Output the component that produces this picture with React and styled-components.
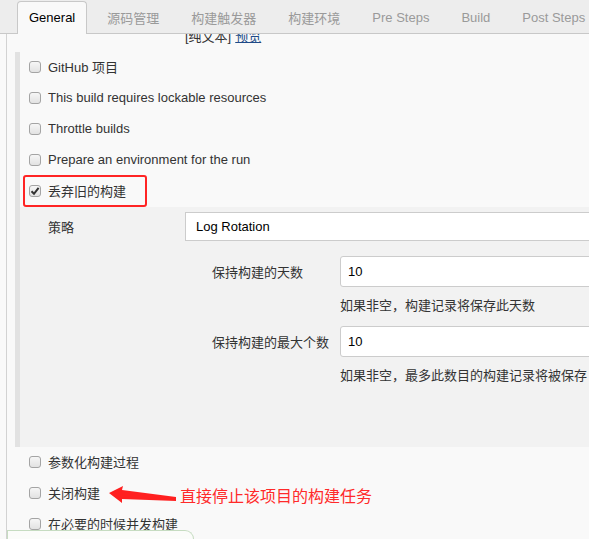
import React from "react";
import styled, { createGlobalStyle } from "styled-components";

const GlobalStyle = createGlobalStyle`
  html, body { margin: 0; padding: 0; background: #f9f9f9; overflow: hidden; }
  body {
    font-family: "Liberation Sans", Arial, "Noto Sans CJK SC", sans-serif;
    font-size: 13px;
    color: #333;
  }
`;

const Page = styled.div`
  position: relative;
  width: 589px;
  height: 539px;
  overflow: hidden;
  background: #f9f9f9;
`;

const TabBar = styled.div`
  display: flex;
  align-items: flex-end;
  height: 34px;
  box-sizing: border-box;
  padding-left: 17px;
  background: #ededed;
  border-bottom: 1px solid #c8c8c8;
  width: 700px;
`;

const Tab = styled.div`
  flex-shrink: 0;
  height: 33px;
  box-sizing: border-box;
  margin-bottom: -1px;
  margin-right: 8px;
  padding: 0 11px 1px;
  display: flex;
  align-items: center;
  white-space: nowrap;
  border: 1px solid ${(p) => (p.$active ? "#c8c8c8" : "transparent")};
  border-bottom: none;
  border-radius: 4px 4px 0 0;
  background: ${(p) => (p.$active ? "#f9f9f9" : "transparent")};
  color: ${(p) => (p.$active ? "#000" : "#9a9a9a")};
`;

const Content = styled.div`
  margin-left: 6px;
  width: 700px;
  height: 505px;
  overflow: hidden;
  border-left: 1px solid #d2d2d2;
  background: #f9f9f9;
`;

const PreviewLine = styled.div`
  margin-top: -5px;
  height: 16px;
  line-height: 16px;
  padding-left: 178px;
  color: #333;
`;

const PreviewLink = styled.a`
  color: #204a87;
  text-decoration: underline;
  margin-left: 4px;
`;

const Section = styled.div`
  margin-left: 8px;
  margin-top: ${(p) => p.$top || 0}px;
  border-left: 5px solid ${(p) => (p.$bar ? "#e2e2e2" : "transparent")};
`;

const CheckRow = styled.div`
  position: relative;
  height: 31px;
  display: flex;
  align-items: center;
  gap: 7px;
  padding-left: 9px;
  padding-bottom: 2px;
  box-sizing: border-box;
  white-space: nowrap;
  color: #333;
`;

const Box = styled.span`
  width: 12px;
  height: 12px;
  box-sizing: border-box;
  border: 1px solid #a4a4a4;
  border-radius: 3px;
  background: linear-gradient(#f6f6f6, #e2e2e2);
  display: flex;
  align-items: center;
  justify-content: center;
  flex-shrink: 0;
`;

const Highlight = styled.div`
  position: absolute;
  left: 3px;
  top: -1px;
  width: 124px;
  height: 32px;
  box-sizing: border-box;
  border: 2px solid #ff2424;
  border-radius: 3px;
`;

const Panel = styled.div`
  background: #f2f2f2;
  padding: 5px 0 62px 28px;
`;

const StrategyRow = styled.div`
  display: flex;
  align-items: center;
  height: 29px;
`;

const StrategyLabel = styled.div`
  width: 137px;
  flex-shrink: 0;
`;

const Select = styled.div`
  flex: 1;
  height: 29px;
  box-sizing: border-box;
  border: 1px solid #cccccc;
  background: #fff;
  padding-left: 10px;
  display: flex;
  align-items: center;
  color: #000;
`;

const Field = styled.div`
  margin-top: ${(p) => p.$top}px;
  padding-left: 164px;
`;

const FieldRow = styled.div`
  display: flex;
  align-items: center;
`;

const FieldLabel = styled.div`
  width: 128px;
  flex-shrink: 0;
`;

const Input = styled.div`
  flex: 1;
  height: 31px;
  box-sizing: border-box;
  border: 1px solid #cccccc;
  border-radius: 3px;
  background: #fff;
  padding-left: 7px;
  display: flex;
  align-items: center;
  color: #000;
`;

const Help = styled.div`
  margin-left: 128px;
  margin-top: 10px;
  line-height: 18px;
  color: #333;
`;

const Arrow = styled.svg`
  position: absolute;
  left: 88px;
  top: 6px;
`;

const Note = styled.div`
  position: absolute;
  left: 160px;
  top: 6px;
  line-height: 22px;
  font-size: 16px;
  color: #ff2a2a;
  font-family: "Noto Sans CJK SC", sans-serif;
`;

const GreenTab = styled.div`
  position: absolute;
  left: 7px;
  top: 530px;
  width: 187px;
  height: 20px;
  box-sizing: border-box;
  border: 1px solid #c6dcc1;
  border-bottom: none;
  border-radius: 0 9px 0 0;
  background: #fbfcfa;
`;

const Check = ({ checked }) => (
  <Box>
    {checked && (
      <svg width="10" height="10" viewBox="0 0 10 10">
        <path d="M1.5 5.2 L4 7.8 L8.6 1.8" fill="none" stroke="#333" strokeWidth="2" />
      </svg>
    )}
  </Box>
);

const tabs = ["General", "源码管理", "构建触发器", "构建环境", "Pre Steps", "Build", "Post Steps"];

export default function App() {
  return (
    <Page>
      <GlobalStyle />
      <TabBar>
        {tabs.map((t, i) => (
          <Tab key={t} $active={i === 0}>{t}</Tab>
        ))}
      </TabBar>
      <Content>
        <PreviewLine>
          [纯文本]<PreviewLink>预览</PreviewLink>
        </PreviewLine>
        <Section $bar $top={7}>
          <CheckRow><Check />GitHub 项目</CheckRow>
          <CheckRow><Check />This build requires lockable resources</CheckRow>
          <CheckRow><Check />Throttle builds</CheckRow>
          <CheckRow><Check />Prepare an environment for the run</CheckRow>
          <CheckRow>
            <Check checked />丢弃旧的构建
            <Highlight />
          </CheckRow>
          <Panel>
            <StrategyRow>
              <StrategyLabel>策略</StrategyLabel>
              <Select>Log Rotation</Select>
            </StrategyRow>
            <Field $top={15}>
              <FieldRow>
                <FieldLabel>保持构建的天数</FieldLabel>
                <Input>10</Input>
              </FieldRow>
              <Help>如果非空，构建记录将保存此天数</Help>
            </Field>
            <Field $top={11}>
              <FieldRow>
                <FieldLabel>保持构建的最大个数</FieldLabel>
                <Input>10</Input>
              </FieldRow>
              <Help>如果非空，最多此数目的构建记录将被保存</Help>
            </Field>
          </Panel>
        </Section>
        <Section>
          <CheckRow><Check />参数化构建过程</CheckRow>
          <CheckRow>
            <Check />关闭构建
            <Arrow width="70" height="22" viewBox="0 0 70 22">
              <polygon points="1,9 15,2 14,6 68,13 68,17 14,15 14,19" fill="#ff2020" />
            </Arrow>
            <Note>直接停止该项目的构建任务</Note>
          </CheckRow>
          <CheckRow><Check />在必要的时候并发构建</CheckRow>
        </Section>
      </Content>
      <GreenTab />
    </Page>
  );
}
